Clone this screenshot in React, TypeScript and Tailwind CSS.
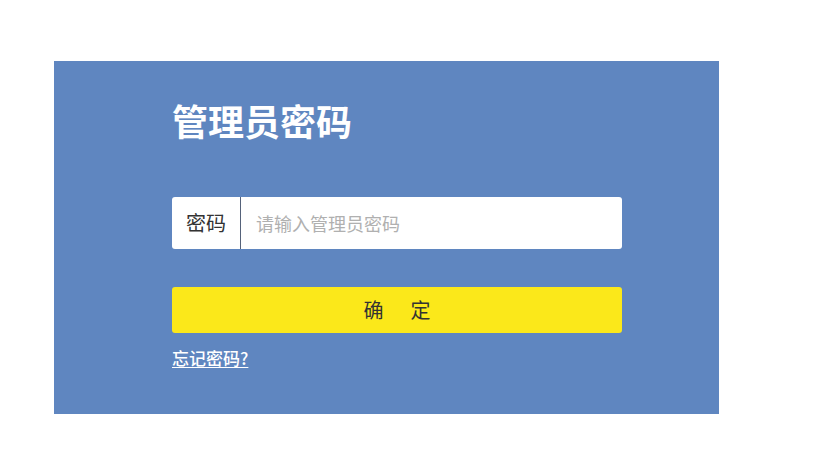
import React, { useState } from 'react';

const font = { fontFamily: '"Noto Sans CJK SC", "Noto Sans", sans-serif' };

export default function App() {
  const [pwd, setPwd] = useState('');

  return (
    <div className="w-[819px] h-[464px] bg-white overflow-hidden" style={font}>
      <div className="ml-[54px] mt-[61px] w-[665px] h-[353px] bg-[#5f86c0] pl-[118px] pt-[41px]">
        <div className="w-[450px] flex flex-col">
          <h1 className="text-[36px] leading-[36px] font-bold text-white">管理员密码</h1>

          <div className="mt-[59px] h-[52px] bg-white rounded-[3px] flex items-center">
            <label className="w-[69px] h-full flex items-center justify-center text-[20px] text-[#333] border-r border-[#55627a]">
              密码
            </label>
            <input
              type="password"
              value={pwd}
              onChange={(e) => setPwd(e.target.value)}
              placeholder="请输入管理员密码"
              className="flex-1 h-full pl-[15px] pr-3 bg-transparent outline-none text-[18px] text-[#333] placeholder:text-[#b0b0b0]"
            />
          </div>

          <button className="mt-[38px] h-[46px] w-full bg-[#fbe81a] rounded-[3px] text-[20px] text-[#333] flex items-center justify-center">
            确<span className="inline-block w-[27px]" />定
          </button>

          <a href="#" className="mt-[16px] self-start text-[17px] leading-none font-medium text-white underline underline-offset-2">
            忘记密码?
          </a>
        </div>
      </div>
    </div>
  );
}
